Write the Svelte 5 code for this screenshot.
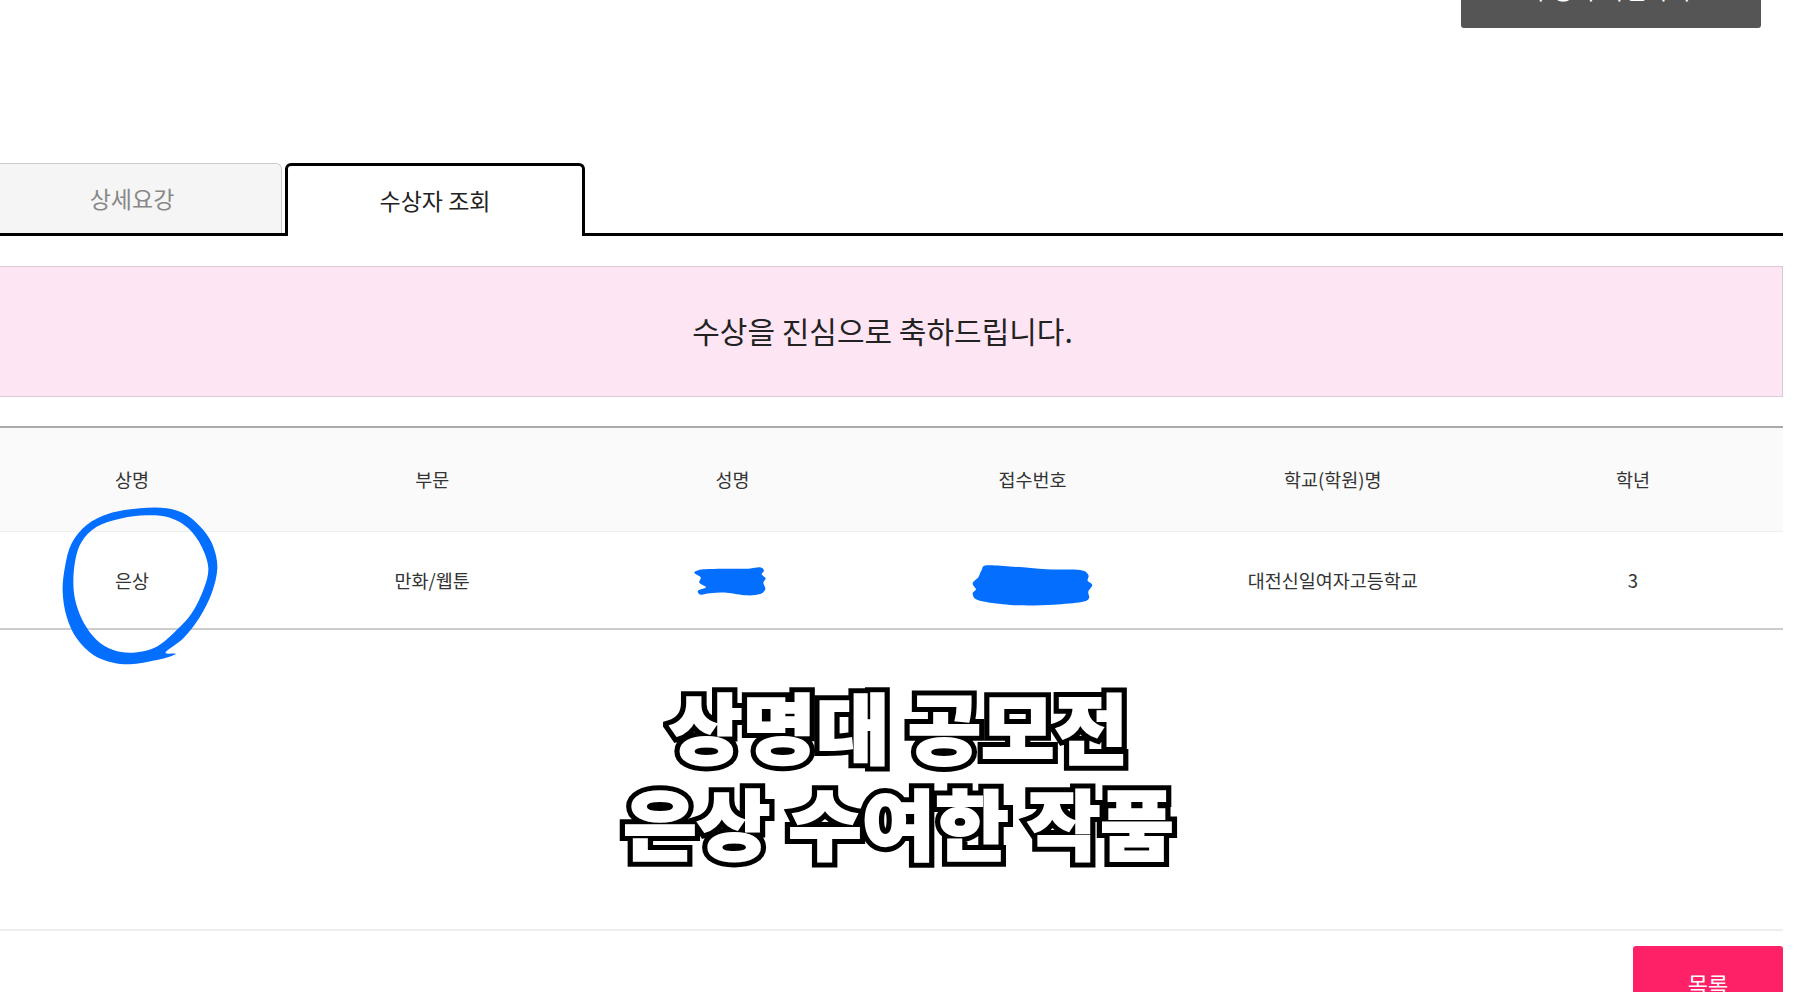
<script>
  const columns = ["상명", "부문", "성명", "접수번호", "학교(학원)명", "학년"];
  const row = ["은상", "만화/웹툰", "", "", "대전신일여자고등학교", "3"];
  const captionLines = ["상명대 공모전", "은상 수여한 작품"];

  // turns a list of [x, y] points into a closed smooth path
  function smooth(points) {
    const n = points.length;
    let d = `M${points[0][0]} ${points[0][1]}`;
    for (let i = 0; i < n; i++) {
      const p0 = points[(i - 1 + n) % n];
      const p1 = points[i];
      const p2 = points[(i + 1) % n];
      const p3 = points[(i + 2) % n];
      const c1x = p1[0] + (p2[0] - p0[0]) / 6;
      const c1y = p1[1] + (p2[1] - p0[1]) / 6;
      const c2x = p2[0] - (p3[0] - p1[0]) / 6;
      const c2y = p2[1] - (p3[1] - p1[1]) / 6;
      d += `C${c1x} ${c1y} ${c2x} ${c2y} ${p2[0]} ${p2[1]}`;
    }
    return d + "Z";
  }

  const ringOuter = [[527,522],[480,538],[400,552],[340,548],[280,525],[230,475],[200,410],[188,335],[195,260],[215,190],[260,135],[330,100],[420,85],[500,85],[560,105],[610,150],[640,200],[652,265],[635,340],[600,410],[550,475],[497,517]];
  const ringInner = [[400,518],[340,510],[290,480],[252,430],[228,370],[220,310],[226,240],[245,185],[290,140],[360,116],[440,106],[510,113],[565,145],[605,200],[625,265],[610,330],[575,400],[530,450],[470,500]];
  const blobName = [[103,98],[130,88],[200,86],[265,86],[300,82],[312,92],[305,103],[317,115],[310,128],[316,148],[300,162],[260,166],[200,158],[150,160],[122,164],[114,152],[138,142],[118,128],[122,112]];
  const blobNumber = [[965,90],[980,76],[1060,80],[1160,88],[1260,90],[1285,105],[1283,122],[1297,135],[1285,155],[1287,175],[1265,186],[1180,194],[1080,196],[990,188],[948,178],[938,160],[948,148],[938,130],[955,112]];
</script>

<div class="page">
  <div class="top">
    <div class="top-button">수상자 확인하기</div>
  </div>

  <div class="board">
    <div class="tabs">
      <div class="tab">상세요강</div>
      <div class="tab active">수상자 조회</div>
    </div>

    <div class="notice">수상을 진심으로 축하드립니다.</div>

    <div class="grid head">
      {#each columns as c}
        <div>{c}</div>
      {/each}
    </div>
    <div class="grid body">
      {#each row as c}
        <div>{c}</div>
      {/each}
    </div>

    <div class="caption">
      {#each captionLines as line}
        <div class="line" data-text={line}>{line}</div>
      {/each}
    </div>

    <div class="footer">
      <div class="list-button">목록</div>
    </div>
  </div>

  <svg class="marks" viewBox="0 0 1798 992" aria-hidden="true">
    <g transform="translate(0 480) scale(0.33333)">
      <path fill-rule="evenodd" d={smooth(ringOuter) + smooth(ringInner)} />
    </g>
    <g transform="translate(660 540) scale(0.33333)">
      <path d={smooth(blobName)} />
      <path d={smooth(blobNumber)} />
    </g>
  </svg>
</div>

<style>
  :global(body) {
    margin: 0;
    background: #fff;
  }

  .page {
    position: relative;
    width: 1798px;
    height: 992px;
    overflow: hidden;
    font-family: "Noto Sans CJK KR", "Noto Sans", sans-serif;
    color: #333;
  }

  .top {
    display: flex;
    justify-content: flex-end;
    height: 163px;
    padding-right: 37px;
  }

  .top-button {
    width: 300px;
    height: 60px;
    margin-top: -32px;
    border-radius: 3px;
    background: #555;
    color: #fff;
    font-size: 23px;
    letter-spacing: 1px;
    line-height: 42px;
    text-align: center;
  }

  .board {
    width: 1801px;
    margin-left: -18px;
  }

  .tabs {
    display: flex;
    height: 70px;
    border-bottom: 3px solid #000;
  }

  .tab {
    box-sizing: border-box;
    width: 300px;
    height: 70px;
    padding-top: 12px;
    margin-right: 3px;
    border: 1px solid #ccc;
    border-bottom: 0;
    border-radius: 6px 6px 0 0;
    background: #f5f5f5;
    color: #888;
    font-size: 23px;
    line-height: 44px;
    text-align: center;
  }

  .tab.active {
    height: 73px;
    padding-top: 12px;
    margin-right: 0;
    border: 3px solid #000;
    border-bottom: 0;
    background: #fff;
    color: #222;
  }

  .notice {
    height: 129px;
    margin-top: 30px;
    border: 1px solid #dccad6;
    background: #fee5f4;
    color: #222;
    font-size: 30px;
    line-height: 127px;
    text-align: center;
  }

  .grid {
    display: grid;
    grid-template-columns: repeat(6, 1fr);
    font-size: 18.5px;
    text-align: center;
  }

  .head {
    height: 103px;
    margin-top: 29px;
    border-top: 2px solid #aaa;
    border-bottom: 1px solid #eee;
    background: #fafafa;
    line-height: 103px;
  }

  .body {
    height: 96px;
    border-bottom: 2px solid #ccc;
    line-height: 96px;
  }

  .caption {
    padding: 47px 0 60px 32px;
    font-size: 76px;
    font-weight: 900;
    line-height: 96px;
    text-align: center;
  }

  /* black outline underneath, fattened white letter on top */
  .line {
    position: relative;
    color: #000;
    -webkit-text-stroke: 12px #000;
    transform: scaleX(1.05);
  }

  .line::after {
    content: attr(data-text);
    position: absolute;
    inset: 0;
    color: #fff;
    -webkit-text-stroke: 2px #fff;
  }

  .footer {
    display: flex;
    justify-content: flex-end;
    padding-top: 15px;
    border-top: 2px solid #eee;
  }

  .list-button {
    width: 150px;
    height: 74px;
    border-radius: 3px;
    background: #ff2167;
    color: #fff;
    font-size: 22px;
    line-height: 74px;
    text-align: center;
  }

  .marks {
    position: absolute;
    inset: 0;
    width: 1798px;
    height: 992px;
    fill: #046eff;
    pointer-events: none;
  }
</style>
